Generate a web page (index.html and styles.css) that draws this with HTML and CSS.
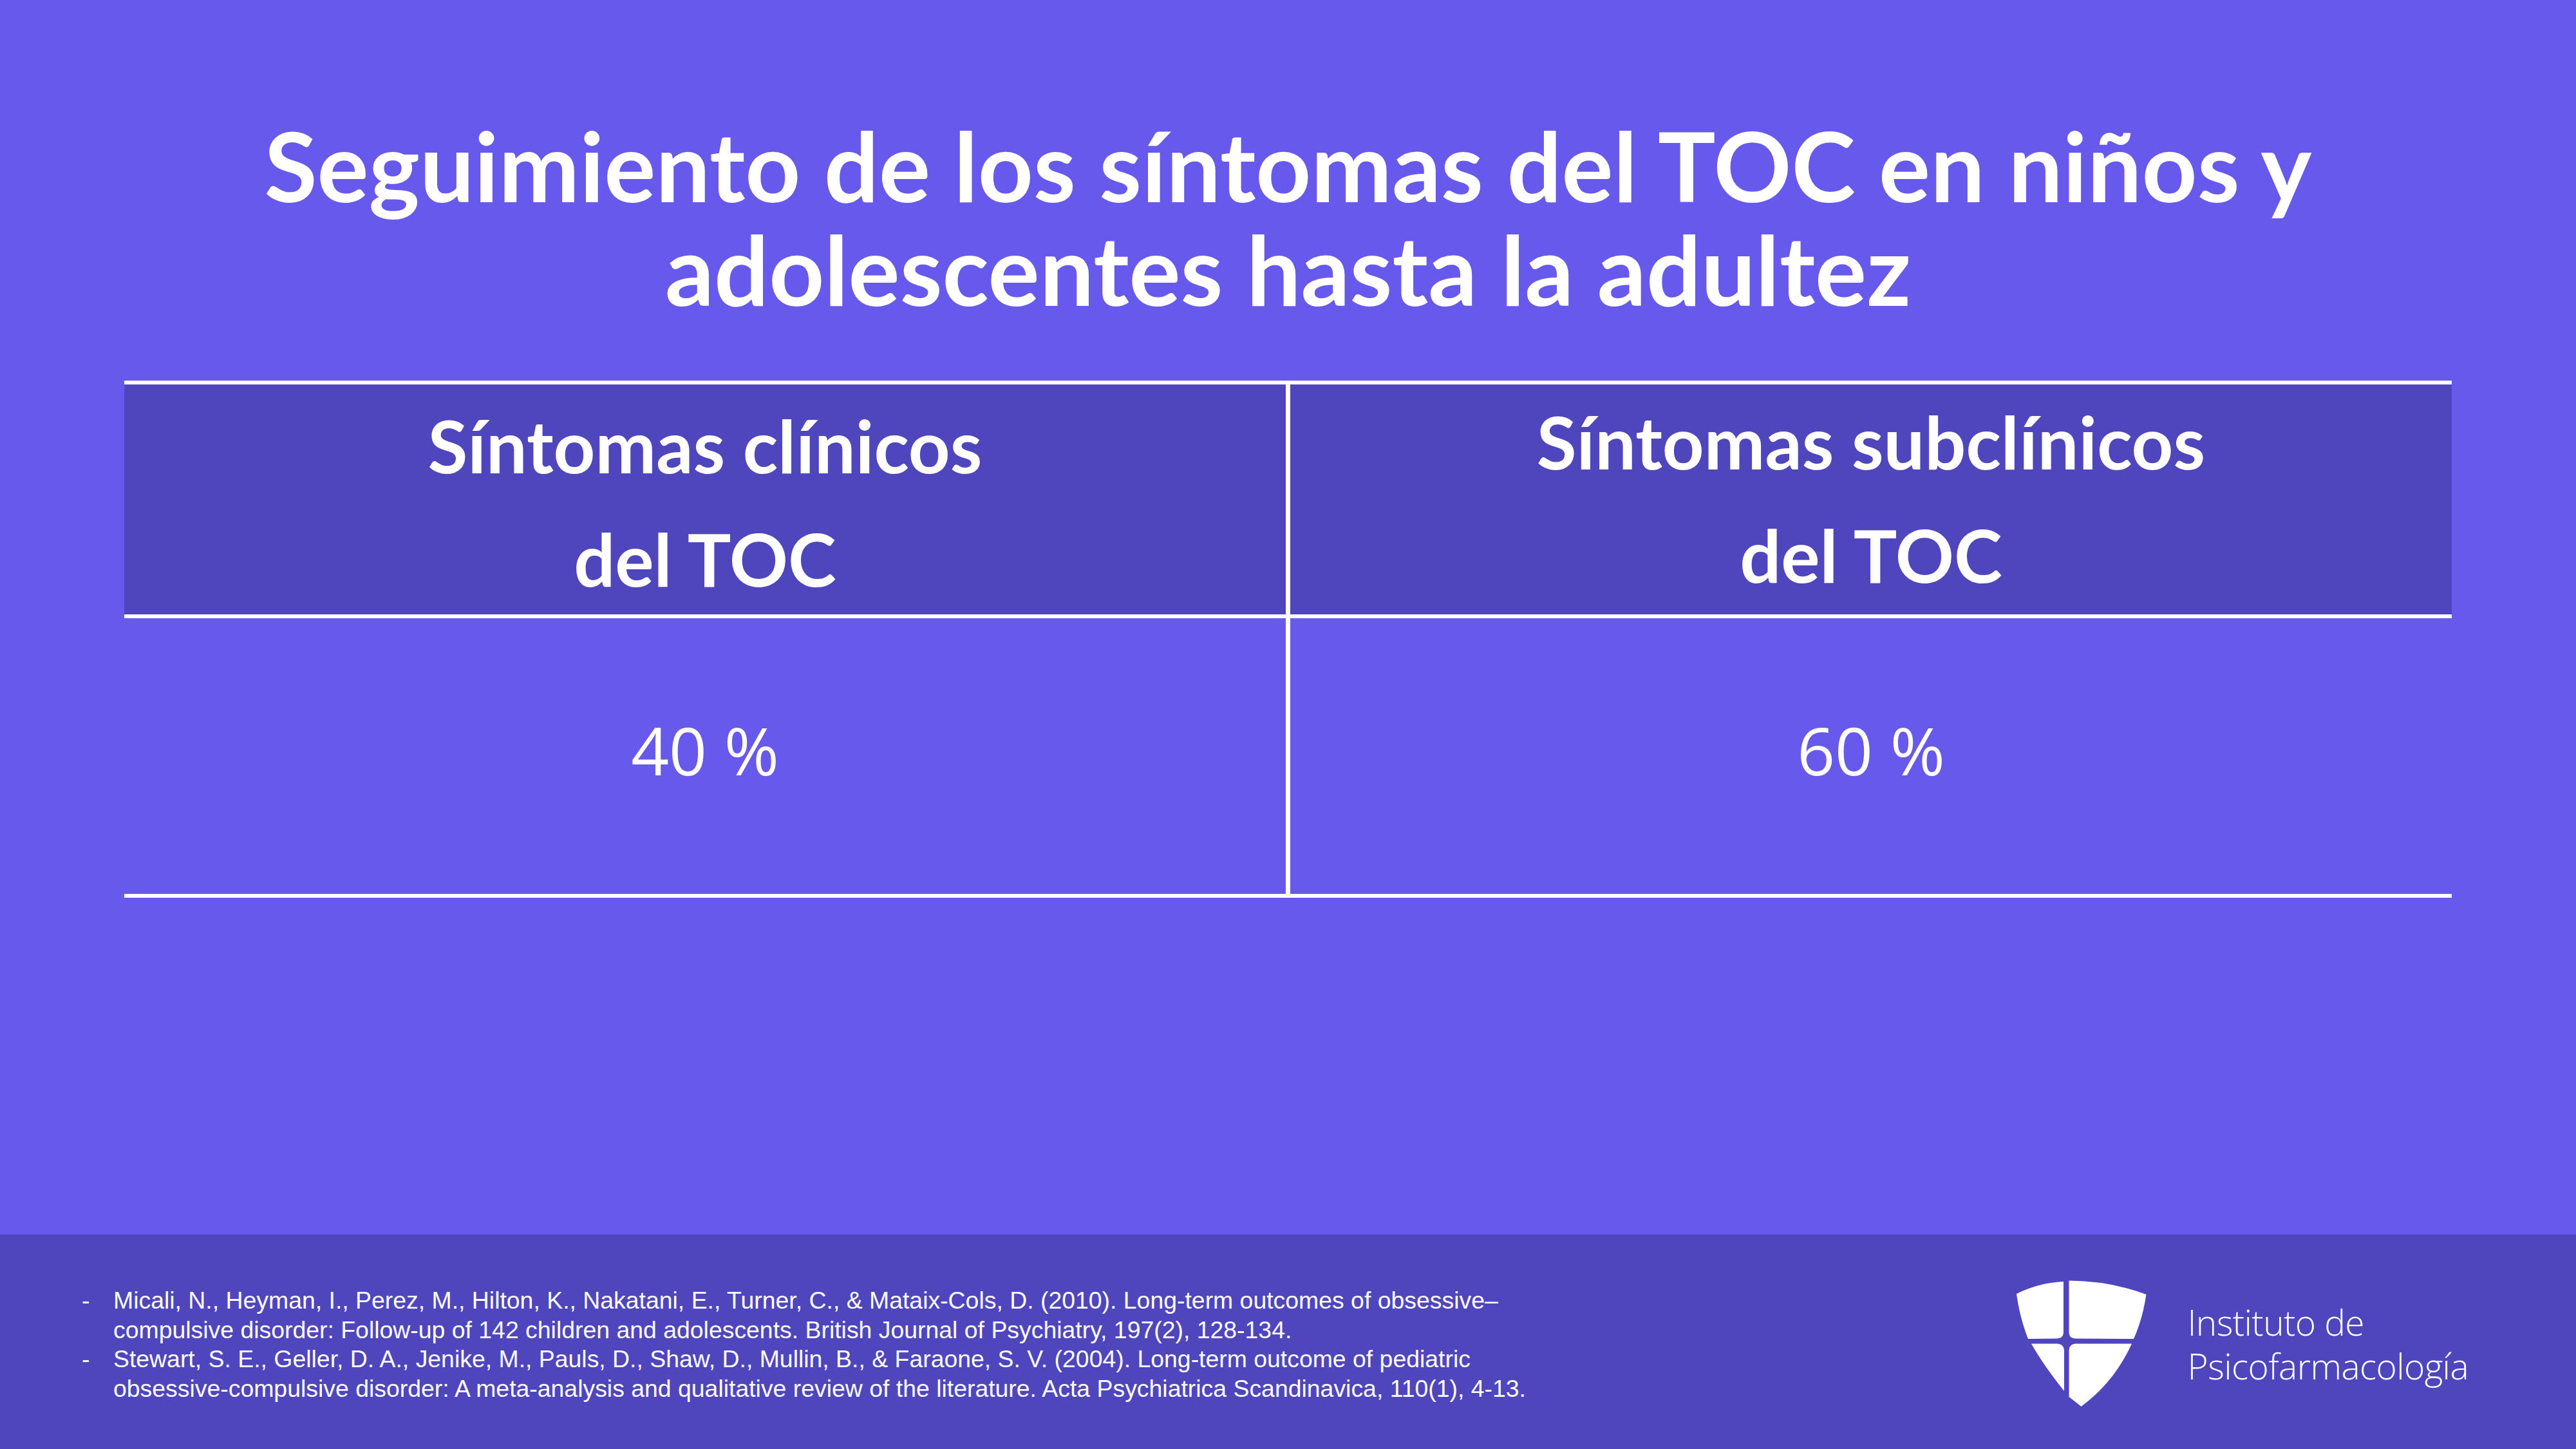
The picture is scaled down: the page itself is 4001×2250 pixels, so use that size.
FILE: index.html
```html
<!DOCTYPE html>
<html lang="es">
<head>
<meta charset="utf-8">
<title>Seguimiento de los síntomas del TOC</title>
<link rel="stylesheet" href="styles.css">
</head>
<body>
<div class="page">
  <main class="main">
    <h1 class="title">Seguimiento de los síntomas del TOC en niños y<br>adolescentes hasta la adultez</h1>
    <div class="table">
      <div class="th th--left">Síntomas clínicos<br>del TOC</div>
      <div class="th th--right">Síntomas subclínicos<br>del TOC</div>
      <div class="td td--left">40 %</div>
      <div class="td td--right">60 %</div>
    </div>
  </main>
  <footer class="footer">
    <ul class="refs">
      <li class="ref"><span class="dash">-</span><span class="ref-text">Micali, N., Heyman, I., Perez, M., Hilton, K., Nakatani, E., Turner, C., &amp; Mataix-Cols, D. (2010). Long-term outcomes of obsessive–<br>compulsive disorder: Follow-up of 142 children and adolescents. British Journal of Psychiatry, 197(2), 128-134.</span></li>
      <li class="ref"><span class="dash">-</span><span class="ref-text">Stewart, S. E., Geller, D. A., Jenike, M., Pauls, D., Shaw, D., Mullin, B., &amp; Faraone, S. V. (2004). Long-term outcome of pediatric<br>obsessive-compulsive disorder: A meta-analysis and qualitative review of the literature. Acta Psychiatrica Scandinavica, 110(1), 4-13.</span></li>
    </ul>
    <div class="logo">
      <svg class="shield" viewBox="0 0 202 197" width="202" height="197" aria-hidden="true">
        <path fill="#fff" d="M0,21 Q34,4 73,2 L73,80 Q73,90.5 62,90.5 L18,91 Q5,58 0,21 Z"/>
        <path fill="#fff" d="M81.5,0.5 Q146,1 201.5,22 Q196,60 182,91 L92,90.5 Q81.5,90.5 81.5,80 Z"/>
        <path fill="#fff" d="M23,98.5 L63,98.5 Q74,99 74,110 L74,172 Q42,132 23,98.5 Z"/>
        <path fill="#fff" d="M92,98.5 L179,98.5 Q152,158 100.5,196 L81.5,181 L81.5,110 Q81.5,99 92,98.5 Z"/>
      </svg>
      <div class="logo-text">Instituto de<br>Psicofarmacología</div>
    </div>
  </footer>
</div>
</body>
</html>
```

FILE: styles.css
```css
html, body {
  margin: 0;
  padding: 0;
}

body {
  background: #6759eb;
  color: #ffffff;
  font-family: "Lato", "Open Sans", sans-serif;
}

.page {
  width: 4001px;
  height: 2250px;
  display: flex;
  flex-direction: column;
  background: #6759eb;
}

.main {
  flex: 1;
  display: flex;
  flex-direction: column;
  align-items: center;
  padding-top: 176px;
}

.title {
  margin: 0;
  font-family: "Lato", sans-serif;
  font-weight: 700;
  font-size: 150px;
  line-height: 161px;
  text-align: center;
  white-space: nowrap;
  color: #ffffff;
}

.table {
  margin-top: 93px;
  width: 3615px;
  display: grid;
  grid-template-columns: 1811px 1804px;
  grid-template-rows: 363px 428px;
  border-top: 6px solid #ffffff;
  border-bottom: 6px solid #ffffff;
}

.th {
  background: #4f46be;
  display: flex;
  align-items: center;
  justify-content: center;
  text-align: center;
  font-family: "Lato", sans-serif;
  font-weight: 700;
  font-size: 113px;
  line-height: 176px;
  border-bottom: 6px solid #ffffff;
}

.th--left {
  padding-top: 6px;
}

.th--right {
  padding-bottom: 6px;
}

.td {
  display: flex;
  align-items: center;
  justify-content: center;
  font-family: "Open Sans", "Noto Sans", sans-serif;
  font-weight: 400;
  font-size: 103px;
  line-height: 103px;
  padding-bottom: 20px;
}

.th--left,
.td--left {
  border-right: 7px solid #ffffff;
}

.footer {
  height: 333px;
  flex: none;
  background: #4f46be;
  display: flex;
  justify-content: space-between;
  align-items: flex-start;
  padding: 80px 167px 0 127px;
  box-sizing: border-box;
}

.refs {
  list-style: none;
  margin: 0;
  padding: 0;
  font-family: "Liberation Sans", Arial, sans-serif;
  font-size: 37.4px;
  line-height: 45.5px;
  color: #ffffff;
}

.ref {
  display: flex;
}

.dash {
  width: 49px;
  flex: none;
}

.ref-text {
  white-space: nowrap;
}

.logo {
  display: flex;
  align-items: center;
  gap: 64px;
  margin-top: -9px;
}

.shield {
  display: block;
  flex: none;
}

.logo-text {
  font-family: "Open Sans", sans-serif;
  font-weight: 300;
  font-size: 55px;
  letter-spacing: -0.6px;
  line-height: 68px;
  color: #ffffff;
  white-space: nowrap;
}
```
